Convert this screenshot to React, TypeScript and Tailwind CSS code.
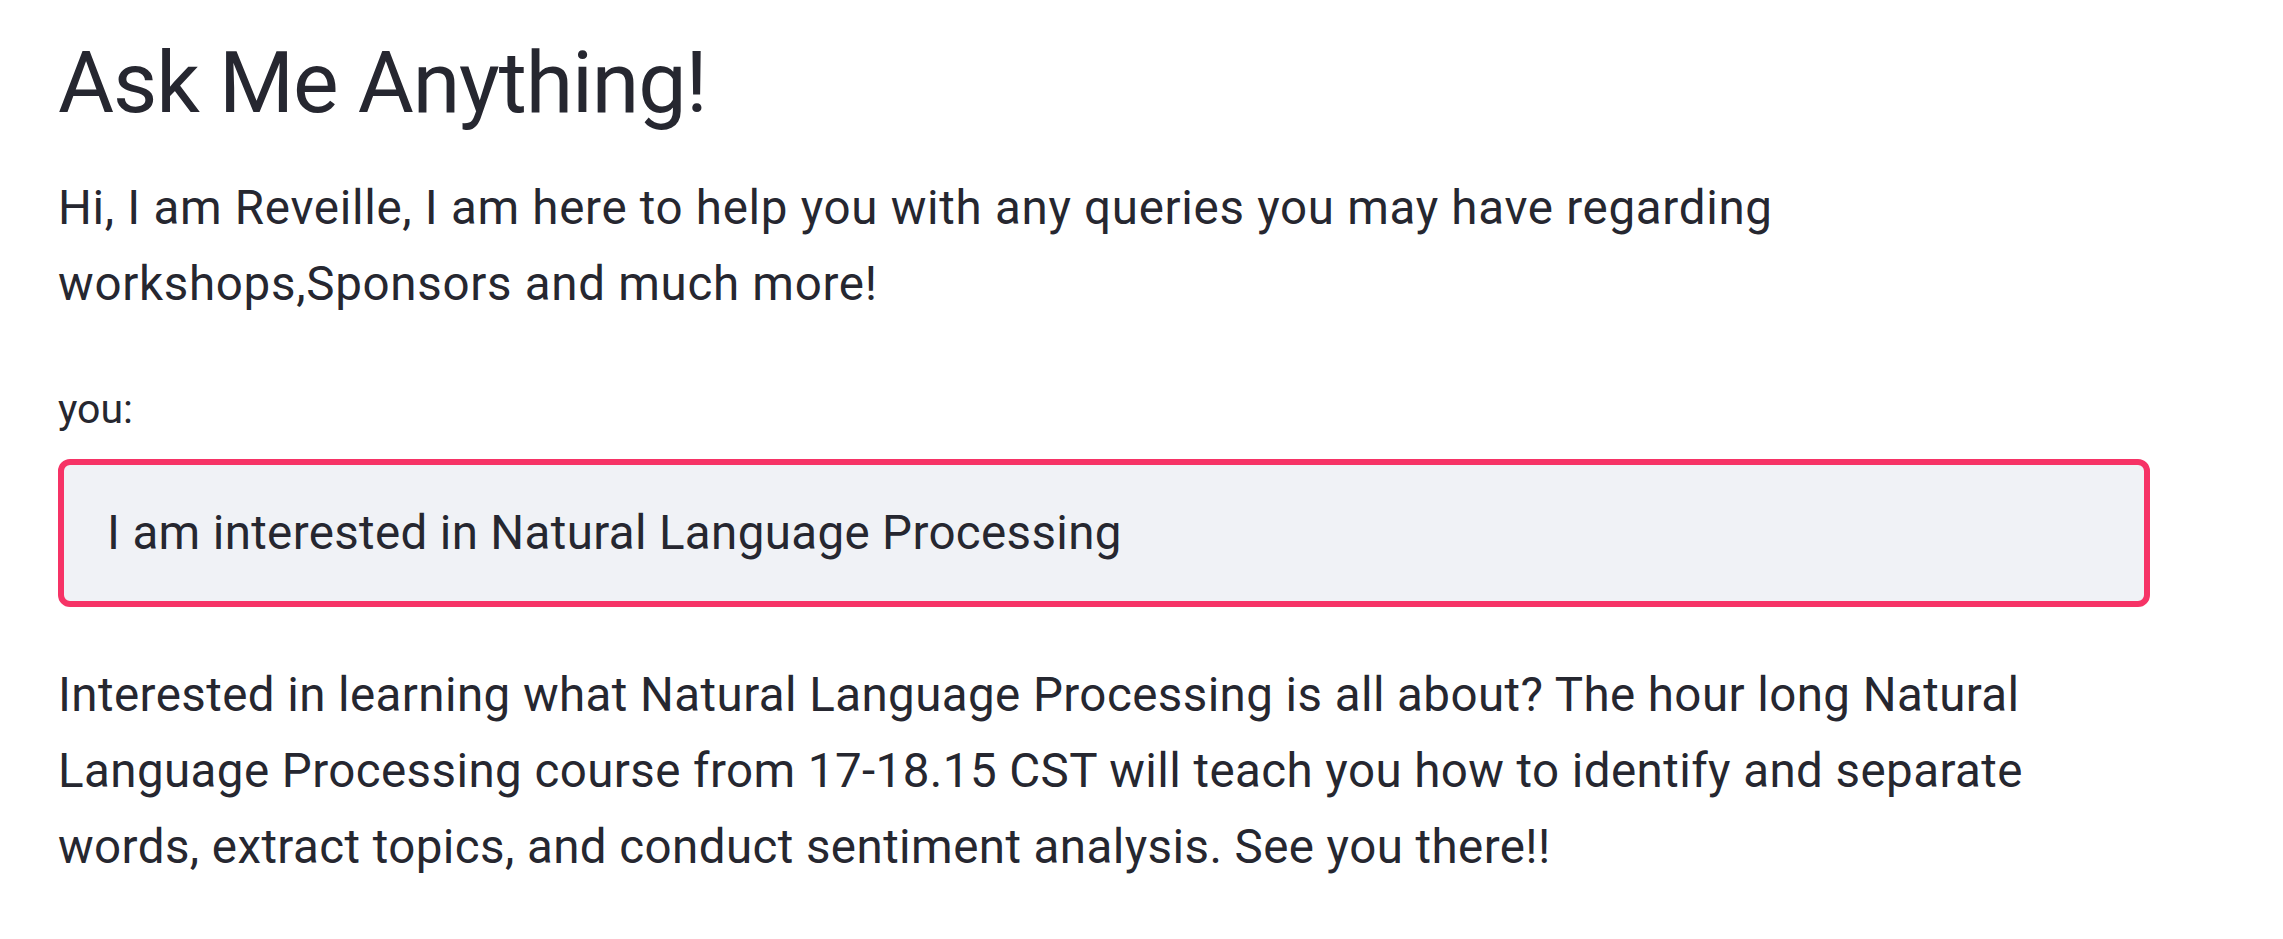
import { useState } from "react";

export default function App() {
  const [query, setQuery] = useState("I am interested in Natural Language Processing");

  return (
    <div className="min-h-screen bg-white text-[#262730] font-['Roboto',sans-serif]">
      <div className="w-[2092px] pl-[58px] box-content pt-[31px]">
        {/* title */}
        <h1 className="text-[86px] leading-[103px] font-normal tracking-[-1.1px]">Ask Me Anything!</h1>

        {/* intro */}
        <p className="mt-[36px] text-[47.5px] leading-[76px] tracking-[0.7px]">
          Hi, I am Reveille, I am here to help you with any queries you may have regarding
          workshops,Sponsors and much more!
        </p>

        {/* text input */}
        <label className="block mt-[59px] text-[41px] leading-[56px]">you:</label>
        <input
          type="text"
          value={query}
          onChange={(e) => setQuery(e.target.value)}
          className="mt-[22px] block w-full h-[148px] rounded-[12px] border-[6px] border-[#f63366] bg-[#f0f2f6] pl-[43px] text-[47.5px] tracking-[0.35px] text-[#262730] outline-none"
        />

        {/* answer */}
        <p className="mt-[50px] text-[47.5px] leading-[76px] tracking-[0.42px]">
          Interested in learning what Natural Language Processing is all about? The hour long Natural
          Language Processing course from 17-18.15 CST will teach you how to identify and separate
          words, extract topics, and conduct sentiment analysis. See you there!!
        </p>
      </div>
    </div>
  );
}
